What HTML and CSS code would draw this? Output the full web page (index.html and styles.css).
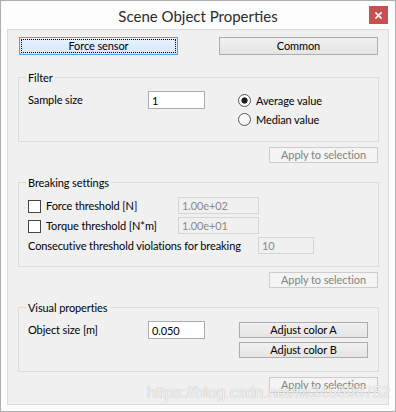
FILE: index.html
```html
<!DOCTYPE html>
<html lang="en">
<head>
    <meta charset="UTF-8">
    <meta name="viewport" content="width=device-width, initial-scale=1.0">
    <title>Scene Object Properties</title>
    <link rel="stylesheet" href="styles.css">
</head>
<body>
    <div class="window">
        <div class="titlebar">
            <div class="title">Scene Object Properties</div>
            <button class="close-button" title="Close">
                <svg width="7" height="7" viewBox="0 0 7 7"><path d="M1 1 L6 6 M6 1 L1 6" stroke="#fff" stroke-width="1.7" stroke-linecap="square"/></svg>
            </button>
        </div>

        <div class="client">
            <div class="tabs">
                <button class="btn tab-button active">Force sensor</button>
                <button class="btn tab-button">Common</button>
            </div>

            <div class="group group-filter">
                <div class="group-title">Filter</div>
                <div class="filter-body">
                    <label class="field-label" for="sample-size">Sample size</label>
                    <input class="edit" id="sample-size" type="text" value="1">
                    <div class="radio-group">
                        <label class="radio"><input type="radio" name="filter" value="average" checked> Average value</label>
                        <label class="radio"><input type="radio" name="filter" value="median"> Median value</label>
                    </div>
                </div>
            </div>
            <div class="apply-row"><button class="btn apply-button" disabled>Apply to selection</button></div>

            <div class="group group-breaking">
                <div class="group-title">Breaking settings</div>
                <div class="breaking-body">
                    <div class="row">
                        <label class="check"><input type="checkbox"> Force threshold [N]</label>
                        <input class="edit edit-wide" type="text" value="1.00e+02" disabled>
                    </div>
                    <div class="row">
                        <label class="check"><input type="checkbox"> Torque threshold [N*m]</label>
                        <input class="edit edit-wide" type="text" value="1.00e+01" disabled>
                    </div>
                    <div class="row">
                        <span class="long-label">Consecutive threshold violations for breaking</span>
                        <input class="edit edit-small" type="text" value="10" disabled>
                    </div>
                </div>
            </div>
            <div class="apply-row"><button class="btn apply-button" disabled>Apply to selection</button></div>

            <div class="group group-visual">
                <div class="group-title">Visual properties</div>
                <div class="visual-body">
                    <label class="field-label" for="object-size">Object size [m]</label>
                    <input class="edit" id="object-size" type="text" value="0.050">
                    <div class="color-buttons">
                        <button class="btn color-button">Adjust color A</button>
                        <button class="btn color-button">Adjust color B</button>
                    </div>
                </div>
            </div>
            <div class="apply-row"><button class="btn apply-button" disabled>Apply to selection</button></div>
        </div>

        <div class="watermark">https://blog.csdn.net/fw245698752</div>
    </div>
</body>
</html>
```

FILE: styles.css
```css
* {
    box-sizing: border-box;
}
body {
    margin: 0;
    font-family: Lato, "Segoe UI", sans-serif;
    font-size: 11px;
    letter-spacing: -0.1px;
    color: #000;
    background: #fff;
}
.window {
    position: relative;
    width: 396px;
    height: 412px;
    border: 1px solid #adadad;
    background: #fdfdfd;
    display: flex;
    flex-direction: column;
}
.titlebar {
    height: 28px;
    display: grid;
    grid-template-columns: 1fr auto 1fr;
}
.title {
    grid-column: 2;
    align-self: center;
    font-size: 15px;
    letter-spacing: 0;
    color: #2b2b2b;
    padding-top: 2px;
}
.close-button {
    grid-column: 3;
    justify-self: end;
    margin: 5px 7px 0 0;
    width: 19px;
    height: 18px;
    padding: 0;
    border: none;
    background: #c75050;
    display: flex;
    align-items: center;
    justify-content: center;
}
.client {
    flex: 1;
    margin: 0 6px 6px;
    border: 1px solid #dadbdc;
    background: #f0f0f0;
    padding: 7px 9px 0 10px;
}

/* buttons */
.btn {
    font-family: inherit;
    font-size: 11px;
    letter-spacing: -0.1px;
    color: #000;
    padding: 0;
    border: 1px solid #acacac;
    background: linear-gradient(#f0f0f0, #e5e5e5);
    line-height: 14px;
}
.tabs {
    height: 18px;
    margin-bottom: 22px;
    padding: 0 1px;
    display: flex;
    justify-content: space-between;
}
.tab-button {
    width: 159px;
    height: 18px;
}
.tab-button.active {
    border-color: #569de5;
    background: linear-gradient(#e8f2fc, #d4e8fb);
    outline: 1px dotted #000;
    outline-offset: -3px;
}
.apply-row {
    display: flex;
    justify-content: flex-end;
    padding-right: 1px;
    margin-top: 5px;
}
.apply-button {
    width: 109px;
    height: 16px;
    border-color: #cccccc;
    background: #f4f4f4;
    color: #838383;
}

/* group boxes */
.group {
    border: 1px solid #dcdcdc;
    padding: 0 9px;
}
.group-breaking,
.group-visual {
    margin-top: 19px;
}
.group-filter,
.group-visual {
    height: 65px;
}
.group-breaking {
    height: 85px;
}
.group-title {
    width: fit-content;
    margin: -8px 0 0 -2px;
    padding: 0 2px;
    line-height: 15px;
    background: #f0f0f0;
}

/* edits */
.edit {
    font-family: inherit;
    font-size: 11px;
    letter-spacing: -0.1px;
    width: 57px;
    height: 18px;
    padding: 0 3px;
    border: 1px solid #abadb3;
    background: #fff;
    color: #000;
}
.edit:disabled {
    height: 17px;
    border-color: #d5d5d5;
    background: #f0f0f0;
    color: #8a8a8a;
}
.edit-wide {
    width: 81px;
}
.edit-small {
    width: 56px;
}
.field-label {
    width: 120px;
}

/* filter */
.filter-body {
    margin-top: 6px;
    display: flex;
    align-items: flex-start;
}
.filter-body .field-label,
.visual-body .field-label {
    line-height: 18px;
}
.radio-group {
    margin-left: 33px;
    display: flex;
    flex-direction: column;
}
.radio {
    height: 19px;
    display: flex;
    align-items: center;
}
.radio input {
    appearance: none;
    width: 13px;
    height: 13px;
    margin: 0 5px 0 0;
    border: 1px solid #555;
    border-radius: 50%;
    background: linear-gradient(#ffffff, #f2f2f2);
}
.radio input:checked {
    background: radial-gradient(circle, #1e1e1e 0 2.8px, #fff 3.4px);
}

/* breaking */
.breaking-body {
    margin-top: 7px;
    display: flex;
    flex-direction: column;
    gap: 3px;
}
.row {
    height: 17px;
    display: flex;
    align-items: center;
}
.check {
    width: 150px;
    display: flex;
    align-items: center;
}
.check input {
    appearance: none;
    width: 13px;
    height: 13px;
    margin: 1px 5px 0 0;
    border: 1px solid #444;
    background: #fff;
}
.long-label {
    width: 230px;
    white-space: nowrap;
}

/* visual */
.visual-body {
    margin-top: 6px;
    display: flex;
    align-items: flex-start;
}
.color-buttons {
    margin: 1px 0 0 34px;
    display: flex;
    flex-direction: column;
    gap: 4px;
}
.color-button {
    width: 129px;
    height: 16px;
}

.watermark {
    position: absolute;
    left: 146px;
    top: 383px;
    font-family: "Liberation Sans", Arial, sans-serif;
    font-size: 16px;
    letter-spacing: 0;
    line-height: 18px;
    color: rgba(255, 255, 255, 0.85);
    text-shadow: 0 0 1px rgba(0, 0, 0, 0.35);
    pointer-events: none;
}
```
